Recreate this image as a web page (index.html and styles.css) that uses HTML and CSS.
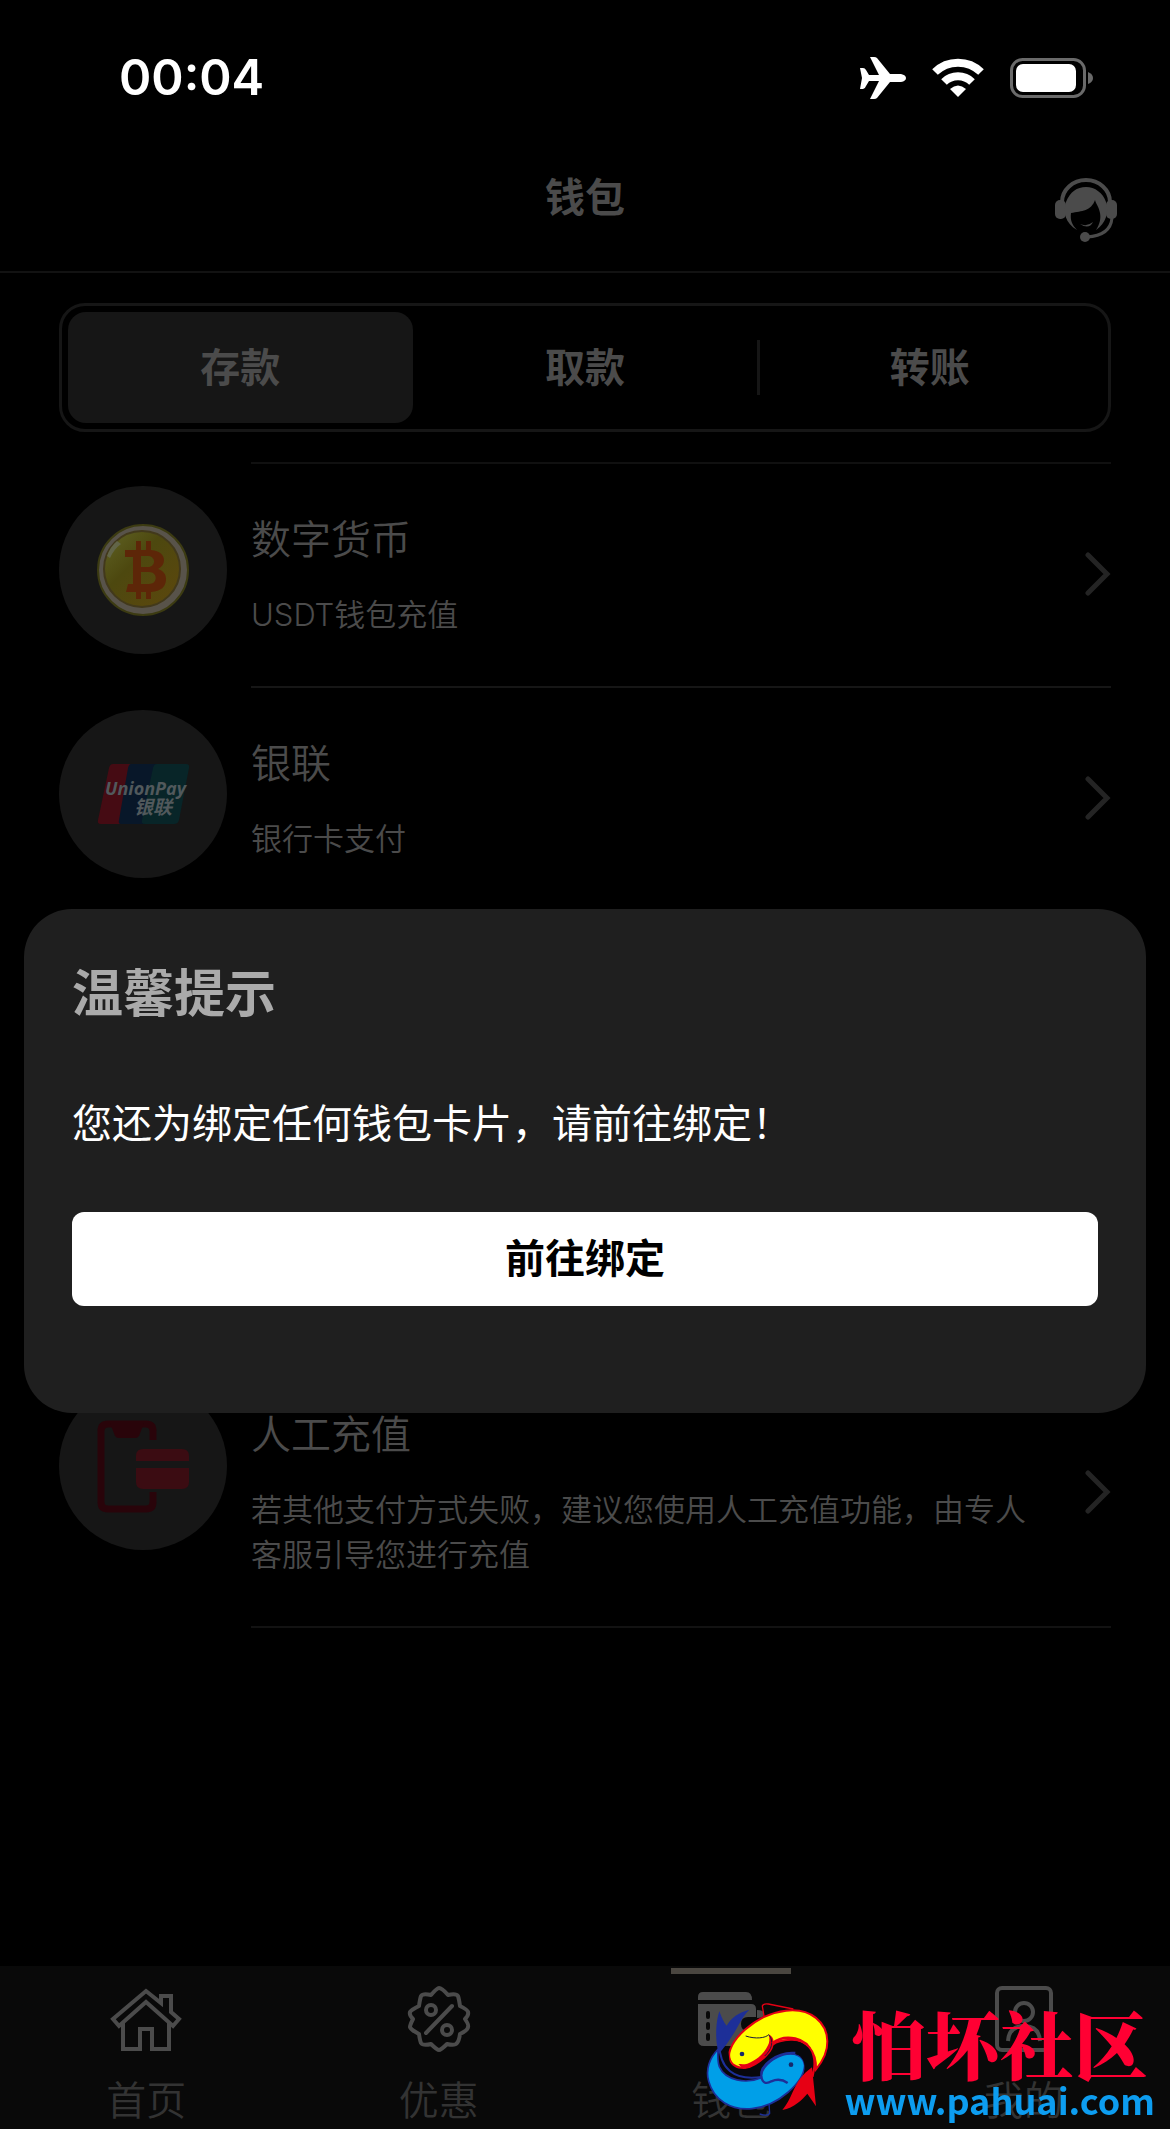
FILE: index.html
```html
<!DOCTYPE html>
<html lang="zh-CN">
<head>
    <meta charset="UTF-8">
    <meta name="viewport" content="width=device-width, initial-scale=1">
    <title>钱包</title>
    <link rel="stylesheet" href="styles.css">
</head>
<body>
    <div class="page">
        <div class="status">
            <span class="time">00:04</span>
            <div class="status-icons">
                <svg width="46" height="42" viewBox="0 0 46 42" fill="#fff">
                    <path d="M0 11h3q2 0 3 2l3 5h10L10 0h4q2 0 3 1l13 16h11q5 1 5 4t-5 4H30L17 41q-1 1-3 1h-4l9-18H9l-3 5q-1 3-3 3H0l2-11z"/>
                </svg>
                <svg width="52" height="40" viewBox="0 0 52 40" fill="none" stroke="#fff">
                    <path d="M3 14a33 33 0 0 1 46 0" stroke-width="8"/>
                    <path d="M12 24a20 20 0 0 1 28 0" stroke-width="8"/>
                    <path d="M26 39l-8-8q8-7 16 0z" fill="#fff" stroke="none"/>
                </svg>
                <svg width="83" height="40" viewBox="0 0 83 40">
                    <rect x="1.500" y="1.500" width="73" height="37" rx="11" fill="none" stroke="#6a6a6a" stroke-width="3"/>
                    <rect x="6" y="6" width="60" height="28" rx="7" fill="#fff"/>
                    <path d="M78 14q5 2 5 6t-5 6z" fill="#6a6a6a"/>
                </svg>
            </div>
        </div>

        <header class="header">
            <h1>钱包</h1>
            <button class="service" type="button" aria-label="客服">
                <svg width="62" height="64" viewBox="0 0 62 64" fill="#4b4b4b">
                    <path d="M7 24a24 22 0 0 1 48 0" fill="none" stroke="#4b4b4b" stroke-width="4"/>
                    <rect x="0" y="22" width="11" height="19" rx="5"/>
                    <rect x="51" y="22" width="11" height="19" rx="5"/>
                    <path d="M22 52C10 45 8 34 11 24 15 14 22 9 31 9s17 6 20 15c3 11 0 21-10 28 4-6 5-12 4-17-1-6-4-9-5-13-4 11-13 11-24 13-1 7 1 12 6 17z"/>
                    <path d="M25 46q7 3 13-2-4 8-13 2z"/>
                    <path d="M57 40c-1 11-9 18-25 19" fill="none" stroke="#4b4b4b" stroke-width="3"/>
                    <circle cx="30" cy="59" r="5"/>
                </svg>
            </button>
        </header>

        <div class="tabs">
            <button class="tab active" type="button">存款</button>
            <button class="tab" type="button">取款</button>
            <button class="tab split" type="button">转账</button>
        </div>

        <ul class="list">
            <li class="row">
                <div class="round">
                    <svg width="96" height="104" viewBox="0 0 96 104">
                        <defs>
                            <linearGradient id="gold" x1="0" y1="0" x2="1" y2="1">
                                <stop offset="0" stop-color="#606425"/>
                                <stop offset="0.400" stop-color="#4d480f"/>
                                <stop offset="1" stop-color="#5d470d"/>
                            </linearGradient>
                        </defs>
                        <circle cx="48" cy="52" r="45" fill="#58534a" stroke="#3c3b12" stroke-width="2"/>
                        <circle cx="47" cy="51" r="38" fill="url(#gold)" stroke="#42391b" stroke-width="2"/>
                        <path d="M12 38q3-9 10-15l4 3q-7 5-11 14z" fill="#626548"/>
                        <path d="M30 32h11v-9h5v9h5v-9h5v9c9 1 13 5 13 10 0 4-2 7-6 9 6 2 8 6 8 10 0 8-5 12-15 13v7h-5v-7h-5v7h-5v-7H31l2-8h5V39h-8zM46 38v11h7c8 0 8-11 0-11zM46 54v12h8c9 0 9-12 0-12z" fill="#5d2608" fill-rule="evenodd"/>
                    </svg>
                </div>
                <div class="body">
                    <div class="info">
                        <h2>数字货币</h2>
                        <p>USDT钱包充值</p>
                    </div>
                    <svg class="arrow" viewBox="0 0 26 44"><path d="M3 3l19 19L3 41"/></svg>
                </div>
            </li>
            <li class="row">
                <div class="round">
                    <svg width="96" height="64" viewBox="0 0 96 64">
                        <path d="M18 2h24L28 62H6q-4 0-3-4L14 6q1-4 4-4z" fill="#450b13"/>
                        <path d="M36 2h30L52 62H26q-3 0-2-4L33 6q1-4 3-4z" fill="#081729"/>
                        <path d="M62 2h29q4 0 3 4L84 58q-1 4-5 4H50q-4 0-3-4L58 6q1-4 4-4z" fill="#082528"/>
                        <text x="10" y="33" class="up-en">UnionPay</text>
                        <text x="39" y="52" class="up-cn">银联</text>
                    </svg>
                </div>
                <div class="body">
                    <div class="info">
                        <h2>银联</h2>
                        <p>银行卡支付</p>
                    </div>
                    <svg class="arrow" viewBox="0 0 26 44"><path d="M3 3l19 19L3 41"/></svg>
                </div>
            </li>
            <li class="row"></li>
            <li class="row"></li>
            <li class="row">
                <div class="round">
                    <svg width="96" height="96" viewBox="0 0 96 96">
                        <path d="M58 22v-9q0-7-7-7H13q-7 0-7 7v71q0 7 7 7h38q7 0 7-7V74" fill="none" stroke="#29040a" stroke-width="7"/>
                        <path d="M15 5h34l-5 13q-1 2-4 2H24q-3 0-4-2z" fill="#29040a"/>
                        <path d="M41 43v-5q0-7 7-7h39q7 0 7 7v5z" fill="#3b0c12"/>
                        <path d="M41 50h53v14q0 7-7 7H48q-7 0-7-7z" fill="#3b0c12"/>
                    </svg>
                </div>
                <div class="body">
                    <div class="info">
                        <h2>人工充值</h2>
                        <p>若其他支付方式失败，建议您使用人工充值功能，由专人客服引导您进行充值</p>
                    </div>
                    <svg class="arrow" viewBox="0 0 26 44"><path d="M3 3l19 19L3 41"/></svg>
                </div>
            </li>
        </ul>

        <nav class="nav">
            <a href="#">
                <svg width="72" height="66" viewBox="0 0 72 66" fill="none" stroke="#4b4b4b" stroke-width="4">
                    <path d="M36 5l15 12V10h10v16l8 7-6 7-27-24L9 40l-6-7z"/>
                    <path d="M13 37v26h17V43h12v20h17V37"/>
                </svg>
                <span>首页</span>
            </a>
            <a href="#">
                <svg width="66" height="66" viewBox="0 0 66 66" fill="none" stroke="#4b4b4b" stroke-width="4" stroke-linejoin="round" stroke-linecap="round">
                    <path d="M33 2q3 0 9 7 8-2 10 1 1 3 2 10 8 4 8 6 1 3-3 7 4 6 3 8 0 3-8 7-1 7-3 9-2 3-10 1-6 6-8 6t-8-6q-8 2-10-1-1-2-2-9-8-4-9-7 0-2 3-8-4-4-3-7 1-2 9-6 1-7 2-10 2-3 10-1 6-7 8-7z"/>
                    <path d="M20 47L46 20"/>
                    <circle cx="25" cy="24" r="5"/>
                    <circle cx="41" cy="44" r="5"/>
                </svg>
                <span>优惠</span>
            </a>
            <a href="#" class="on">
                <svg width="66" height="66" viewBox="0 0 66 66" fill="#4b4b4b">
                    <path d="M0 14V11q0-5 5-5h43q6 0 6 8z"/>
                    <path d="M0 18h53q5 0 5 5v8h-8q-7 0-7 7t7 7h8v9q0 6-6 6H6q-6 0-6-6z"/>
                    <path d="M59 24q7 0 7 4t-7 4z"/>
                    <path d="M10 27v4M10 38v4M10 49v4" stroke="#090909" stroke-width="4" stroke-linecap="round"/>
                </svg>
                <span>钱包</span>
            </a>
            <a href="#">
                <svg width="60" height="66" viewBox="0 0 60 66" fill="none" stroke="#4b4b4b" stroke-width="4">
                    <rect x="3" y="2" width="54" height="62" rx="5"/>
                    <circle cx="30" cy="26" r="9"/>
                    <path d="M14 55q1-15 16-15t16 15"/>
                </svg>
                <span>我的</span>
            </a>
        </nav>
    </div>

    <div class="overlay">
        <div class="dialog" role="dialog" aria-labelledby="tip">
            <h2 id="tip">温馨提示</h2>
            <p>您还为绑定任何钱包卡片，请前往绑定！</p>
            <button type="button">前往绑定</button>
        </div>
    </div>

    <div class="mark">
        <svg width="160" height="145" viewBox="0 0 480 435">
            <!-- upper fish -->
            <path d="M240 108l-5-30q2-8 18-6l75 15" fill="none" stroke="#e60014" stroke-width="4"/>
            <path d="M136 240c-12-55 80-138 170-148 75-9 123 36 124 92 1 35-14 60-34 84 2-55-30-91-76-89-25 1-42 5-54 15-5 30-65 81-108 70-14-5-22-14-22-24z" fill="#ff0" stroke="#e60014" stroke-width="6"/>
            <path d="M138 224c-6 25 12 42 34 40 44 0 95-45 97-76 0-12-5-20-15-25 4 14 2 26-2 33-14 30-40 47-62 55-12 3-20 1-27 1l8 8c-20-5-31-12-33-36z" fill="#e60014"/>
            <path d="M185 168c30 10 60 6 69-4 18 20 8 46-12 64" fill="none" stroke="#1b1b3a" stroke-width="3"/>
            <path d="M265 190c38-30 105-18 118 30 10 20 8 45 2 70" fill="none" stroke="#e60014" stroke-width="8"/>
            <!-- lower fish -->
            <path d="M255 370l2 30q-5 10-30 2" fill="none" stroke="#1d2f98" stroke-width="4"/>
            <path d="M102 208c-25 25-38 60-28 96 15 56 66 88 130 82 80-8 156-80 158-130-4-28-28-40-65-31-35 12-68 40-65 68-45 20-108 9-126-33-5-13-5-32-4-52z" fill="#009fe8" stroke="#1d2f98" stroke-width="5"/>
            <!-- gap between the two bodies -->
            <path d="M108 205c25-6 26 10 28 35 6 28 50 38 95 12 26-15 40-34 44-55 40-26 92-14 107 20 12 32 6 62-10 88-10 16-22 28-36 39 20-36 30-72 24-96-10-34-50-32-80-20-30 13-50 38-49 62-66 20-118 0-123-85z" fill="#08080c"/>
            <path d="M106 190c0 75 42 113 126 101" fill="none" stroke="#1d2f98" stroke-width="6"/>
            <path d="M232 288c2 20 14 26 30 16 20-9 35-5 49 5M232 288c-5-30 45-74 102-69" fill="none" stroke="#1d2f98" stroke-width="7"/>
            <path d="M104 222c-12-50-8-98 2-128 8 20 13 34 22 43 13-24 36-40 68-48-28 25-37 71-92 133z" fill="#1d2f98"/>
            <path d="M384 262l12 117-26-38c-15 18-40 42-75 49 34-37 30-86 89-128z" fill="#e60014"/>
            <circle cx="174" cy="222" r="7" fill="#16296b"/>
            <circle cx="321" cy="254" r="7" fill="#16296b"/>
        </svg>
        <div class="mark-text">
            <strong>怕坏社区</strong>
            <span>www.pahuai.com</span>
        </div>
    </div>
</body>
</html>
```
FILE: styles.css
```css
* {
    box-sizing: border-box;
    margin: 0;
    padding: 0;
}
body {
    background: #000;
    color: #4b4b4b;
    font-family: Inter, "Noto Sans CJK SC", sans-serif;
    font-size: 40px;
    line-height: 56px;
}
button {
    background: none;
    border: 0;
    color: inherit;
    font: inherit;
}
svg {
    display: block;
    flex: none;
}
.page {
    display: flex;
    flex-direction: column;
    min-height: 100vh;
}

/* status bar */
.status {
    display: flex;
    justify-content: space-between;
    align-items: center;
    height: 156px;
    padding: 0 77px 0 119px;
    color: #fff;
}
.time {
    font-size: 49px;
    font-weight: 600;
}
.status-icons {
    display: flex;
    align-items: center;
    gap: 26px;
}

.header {
    display: grid;
    grid-template-columns: 1fr auto 1fr;
    align-items: center;
    padding: 14px 53px 21px;
    border-bottom: 2px solid #121212;
}
.header h1 {
    grid-column: 2;
    height: 80px;
    font-size: 40px;
    font-weight: 700;
}
.service {
    justify-self: end;
}

.tabs {
    display: flex;
    height: 129px;
    margin: 30px 59px;
    padding: 6px;
    border: 3px solid #161616;
    border-radius: 26px;
}
.tab {
    position: relative;
    flex: 1;
    border-radius: 18px;
    font-weight: 700;
}
.tab.active {
    background: #161616;
}
.split::before {
    content: "";
    position: absolute;
    left: 0;
    top: 28px;
    bottom: 28px;
    width: 3px;
    background: #161616;
}

/* payment methods */
.list {
    list-style: none;
    padding: 0 59px;
}
.row {
    display: flex;
    gap: 24px;
    min-height: 224px;
}
.round {
    display: flex;
    flex: none;
    justify-content: center;
    align-items: center;
    width: 168px;
    height: 168px;
    margin-top: 24px;
    border-radius: 50%;
    background: #161616;
}
.body {
    display: flex;
    flex: 1;
    align-items: center;
    justify-content: space-between;
    padding: 47px 0 49px;
    border-top: 2px solid #161616;
}
.row:first-child .body {
    border-color: #101010;
}
.row:last-child .body {
    border-bottom: 2px solid #121212;
}
.info {
    flex: 1;
    max-width: 780px;
}
.info h2 {
    font-size: 40px;
    font-weight: 350;
}
.info p {
    margin-top: 24px;
    font-size: 31px;
    font-weight: 350;
    line-height: 45px;
}
.arrow {
    width: 26px;
    height: 44px;
    fill: none;
    stroke: #242424;
    stroke-width: 5;
    stroke-linecap: round;
}
.up-en {
    fill: #51595c;
    font: italic bold 18px "Open Sans", sans-serif;
}
.up-cn {
    fill: #51595c;
    font: italic bold 19px "Noto Sans CJK SC", sans-serif;
}

.nav {
    display: flex;
    height: 163px;
    margin-top: auto;
    background: #090909;
}
.nav a {
    position: relative;
    display: flex;
    flex: 1;
    flex-direction: column;
    align-items: center;
    gap: 27px;
    padding-top: 20px;
    color: #333;
    font-weight: 350;
    line-height: 44px;
    text-decoration: none;
}
.nav .on::before {
    content: "";
    position: absolute;
    top: 2px;
    width: 120px;
    height: 6px;
    background: #4a4640;
}

/* dialog */
.overlay {
    position: fixed;
    inset: 0;
    display: flex;
    align-items: center;
    padding: 193px 24px 0;
}
.dialog {
    flex: 1;
    padding: 49px 48px 107px;
    border-radius: 48px;
    background: #1f1f1f;
    color: #fff;
}
.dialog h2 {
    color: #aaa;
    font-size: 51px;
    font-weight: 700;
    line-height: 72px;
}
.dialog p {
    margin: 66px 0 60px;
}
.dialog button {
    width: 100%;
    height: 94px;
    border-radius: 12px;
    background: #fff;
    color: #000;
    font-weight: 700;
}

/* site mark */
.mark {
    position: fixed;
    right: 15px;
    bottom: 4px;
    display: flex;
}
.mark-text {
    display: flex;
    flex-direction: column;
    align-items: center;
    padding-top: 20px;
}
.mark strong {
    color: #ff0033;
    font-family: "Noto Serif CJK SC", "Noto Sans CJK SC", serif;
    font-size: 74px;
    font-weight: 900;
    line-height: 84px;
}
.mark span {
    color: #0d9df0;
    font-family: "Noto Sans CJK SC", sans-serif;
    font-size: 36px;
    font-weight: 700;
    line-height: 30px;
}
```
